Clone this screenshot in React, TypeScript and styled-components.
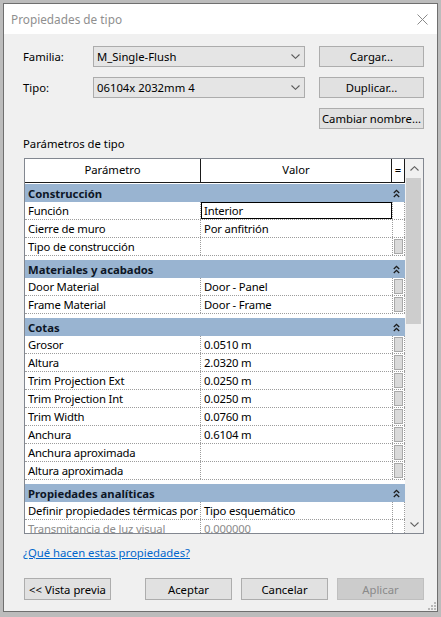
import styled, { createGlobalStyle } from "styled-components";

const GlobalStyle = createGlobalStyle`
  html, body {
    margin: 0;
    padding: 0;
  }
  body {
    font-family: "Noto Sans", "Open Sans", sans-serif;
    font-size: 11.3px;
    color: #000;
  }
`;

const Page = styled.div`
  width: 441px;
  height: 617px;
  box-sizing: border-box;
  padding: 3px 3px 5px 3px;
  background: #bcbcbc;
  overflow: hidden;
`;

const Dialog = styled.div`
  position: relative;
  height: 100%;
  box-sizing: border-box;
  border: 1px solid #6f6f6f;
  display: flex;
  flex-direction: column;
  background: #f0f0f0;
`;

const TitleBar = styled.div`
  height: 30px;
  flex: none;
  background: #fff;
  display: flex;
  align-items: center;
  justify-content: space-between;
  padding: 0 9px 0 7px;
`;

const Title = styled.span`
  font-size: 11.8px;
  color: #8f8f8f;
`;

const Body = styled.div`
  flex: 1;
  display: flex;
  flex-direction: column;
  padding: 12px 13px 11px 19px;
  min-height: 0;
`;

const FormGrid = styled.div`
  display: grid;
  grid-template-columns: 70px 212px 1fr;
  grid-auto-rows: 21px;
  row-gap: 10px;
  align-items: center;
`;

const Label = styled.span`
  white-space: nowrap;
`;

const Combo = styled.div`
  height: 21px;
  box-sizing: border-box;
  border: 1px solid #acacac;
  background: #e5e5e5;
  display: flex;
  align-items: center;
  justify-content: space-between;
  padding: 0 4px 0 3px;
`;

const Button = styled.button<{ $width?: number }>`
  width: ${(p) => p.$width ?? 105}px;
  height: 21px;
  box-sizing: border-box;
  justify-self: end;
  border: 1px solid #adadad;
  background: #e1e1e1;
  font-family: inherit;
  font-size: 11.3px;
  color: #000;
  padding: 0;
  white-space: nowrap;

  &:disabled {
    background: #cccccc;
    border-color: #bfbfbf;
    color: #8a8a8a;
  }
`;

const SideButton = styled(Button)`
  grid-column: 3;
`;

const SectionLabel = styled.div`
  margin-top: 7px;
  margin-bottom: 6px;
  line-height: 16px;
`;

const Table = styled.div`
  margin-left: 1px;
  width: 400px;
  height: 376px;
  flex: none;
  box-sizing: border-box;
  border: 1px solid #828790;
  background: #fff;
  display: flex;
`;

const GridArea = styled.div`
  width: 380px;
  display: flex;
  flex-direction: column;
  overflow: hidden;
`;

const HeaderRow = styled.div`
  display: grid;
  grid-template-columns: 176px 191px 13px;
  height: 24px;
  flex: none;
  box-sizing: border-box;
  border-bottom: 1px solid #1a1a1a;
`;

const HeaderCell = styled.div`
  border-right: 1px solid #1a1a1a;
  text-align: center;
  line-height: 22px;
`;

const Rows = styled.div`
  flex: 1;
  overflow: hidden;
`;

const Group = styled.div<{ $first?: boolean }>`
  margin-top: ${(p) => (p.$first ? 1 : 4)}px;
`;

const GroupHeader = styled.div`
  height: 18px;
  background: #99b4d1;
  display: flex;
  align-items: center;
  justify-content: space-between;
  padding: 0 5px 0 3px;
  font-weight: bold;
  color: #0d1626;
`;

const Row = styled.div`
  display: grid;
  grid-template-columns: 176px 192px 12px;
  height: 18px;
  box-sizing: border-box;
  border-bottom: 1px dotted #9c9c9c;
`;

const Cell = styled.div<{ $active?: boolean; $disabled?: boolean }>`
  border-right: 1px dotted #9c9c9c;
  padding-left: 3px;
  line-height: 17px;
  letter-spacing: -0.18px;
  white-space: nowrap;
  overflow: hidden;
  color: ${(p) => (p.$disabled ? "#8c8c8c" : "#000")};
  box-shadow: ${(p) => (p.$active ? "inset 0 0 0 1px #000" : "none")};
`;

const EqCell = styled.div`
  border-right: 1px dotted #9c9c9c;
  display: flex;
  align-items: center;
  justify-content: center;
`;

const EqBox = styled.div`
  width: 9px;
  height: 15px;
  box-sizing: border-box;
  background: #dadada;
  border: 1px solid #a9a9a9;
`;

const ScrollBar = styled.div`
  flex: 1;
  background: #f0f0f0;
  display: flex;
  flex-direction: column;
`;

const ScrollArrow = styled.div`
  height: 18px;
  flex: none;
  display: flex;
  align-items: center;
  justify-content: center;
`;

const Track = styled.div`
  flex: 1;
  padding: 1px 2px 0 1px;
`;

const Thumb = styled.div`
  height: 146px;
  background: #cdcdcd;
`;

const HelpLink = styled.a`
  margin-top: 11px;
  line-height: 16px;
  color: #0066cc;
  text-decoration: underline;
  align-self: flex-start;
  cursor: pointer;
`;

const Footer = styled.div`
  margin-top: auto;
  display: flex;
  align-items: center;
  padding-left: 1px;
`;

const FooterGroup = styled.div`
  margin-left: auto;
  display: flex;
  gap: 9px;
`;

const FooterButton = styled(Button)`
  height: 22px;
`;

const Grip = styled.svg`
  position: absolute;
  right: 1px;
  bottom: 1px;
`;

type Param = { name: string; value: string; eq?: boolean; active?: boolean; disabled?: boolean };
type Section = { title: string; params: Param[] };

const sections: Section[] = [
  {
    title: "Construcción",
    params: [
      { name: "Función", value: "Interior", active: true },
      { name: "Cierre de muro", value: "Por anfitrión" },
      { name: "Tipo de construcción", value: "", eq: true },
    ],
  },
  {
    title: "Materiales y acabados",
    params: [
      { name: "Door Material", value: "Door - Panel", eq: true },
      { name: "Frame Material", value: "Door - Frame", eq: true },
    ],
  },
  {
    title: "Cotas",
    params: [
      { name: "Grosor", value: "0.0510 m", eq: true },
      { name: "Altura", value: "2.0320 m", eq: true },
      { name: "Trim Projection Ext", value: "0.0250 m", eq: true },
      { name: "Trim Projection Int", value: "0.0250 m", eq: true },
      { name: "Trim Width", value: "0.0760 m", eq: true },
      { name: "Anchura", value: "0.6104 m", eq: true },
      { name: "Anchura aproximada", value: "", eq: true },
      { name: "Altura aproximada", value: "", eq: true },
    ],
  },
  {
    title: "Propiedades analíticas",
    params: [
      { name: "Definir propiedades térmicas por", value: "Tipo esquemático" },
      { name: "Transmitancia de luz visual", value: "0.000000", disabled: true },
    ],
  },
];

const Chevron = ({ up = false, color = "#5a5a5a" }: { up?: boolean; color?: string }) => (
  <svg width="9" height="5" viewBox="0 0 9 5">
    <path
      d={up ? "M0.5 4.5 L4.5 0.7 L8.5 4.5" : "M0.5 0.5 L4.5 4.3 L8.5 0.5"}
      fill="none"
      stroke={color}
      strokeWidth="1.1"
    />
  </svg>
);

const Collapse = () => (
  <svg width="7" height="9" viewBox="0 0 7 9">
    <path d="M0.8 4 L3.5 1.3 L6.2 4 M0.8 8 L3.5 5.3 L6.2 8" fill="none" stroke="#1b1b1b" strokeWidth="1.3" />
  </svg>
);

const App = () => {
  return (
    <>
      <GlobalStyle />
      <Page>
        <Dialog>
          <TitleBar>
            <Title>Propiedades de tipo</Title>
            <svg width="11" height="11" viewBox="0 0 11 11">
              <path d="M0.5 0.5 L10.5 10.5 M10.5 0.5 L0.5 10.5" stroke="#8a8a8a" strokeWidth="1" />
            </svg>
          </TitleBar>
          <Body>
            <FormGrid>
              <Label>Familia:</Label>
              <Combo>
                <span>M_Single-Flush</span>
                <Chevron />
              </Combo>
              <Button>Cargar...</Button>
              <Label>Tipo:</Label>
              <Combo>
                <span>06104x 2032mm 4</span>
                <Chevron />
              </Combo>
              <Button>Duplicar...</Button>
              <SideButton>Cambiar nombre...</SideButton>
            </FormGrid>

            <SectionLabel>Parámetros de tipo</SectionLabel>

            <Table>
              <GridArea>
                <HeaderRow>
                  <HeaderCell>Parámetro</HeaderCell>
                  <HeaderCell>Valor</HeaderCell>
                  <HeaderCell>=</HeaderCell>
                </HeaderRow>
                <Rows>
                  {sections.map((s, i) => (
                    <Group key={s.title} $first={i === 0}>
                      <GroupHeader>
                        <span>{s.title}</span>
                        <Collapse />
                      </GroupHeader>
                      {s.params.map((p) => (
                        <Row key={p.name}>
                          <Cell $disabled={p.disabled}>{p.name}</Cell>
                          <Cell $active={p.active} $disabled={p.disabled}>
                            {p.value}
                          </Cell>
                          <EqCell>{p.eq && <EqBox />}</EqCell>
                        </Row>
                      ))}
                    </Group>
                  ))}
                </Rows>
              </GridArea>
              <ScrollBar>
                <ScrollArrow>
                  <Chevron up color="#606060" />
                </ScrollArrow>
                <Track>
                  <Thumb />
                </Track>
                <ScrollArrow>
                  <Chevron color="#606060" />
                </ScrollArrow>
              </ScrollBar>
            </Table>

            <HelpLink>¿Qué hacen estas propiedades?</HelpLink>

            <Footer>
              <FooterButton $width={87}>&lt;&lt; Vista previa</FooterButton>
              <FooterGroup>
                <FooterButton $width={87}>Aceptar</FooterButton>
                <FooterButton $width={87}>Cancelar</FooterButton>
                <FooterButton $width={87} disabled>
                  Aplicar
                </FooterButton>
              </FooterGroup>
            </Footer>
          </Body>
          <Grip width="8" height="8" viewBox="0 0 8 8">
            {[
              [6, 0],
              [6, 3],
              [3, 3],
              [6, 6],
              [3, 6],
              [0, 6],
            ].map(([x, y]) => (
              <rect key={`${x}-${y}`} x={x} y={y} width="2" height="2" fill="#b8b8b8" />
            ))}
          </Grip>
        </Dialog>
      </Page>
    </>
  );
};

export default App;
